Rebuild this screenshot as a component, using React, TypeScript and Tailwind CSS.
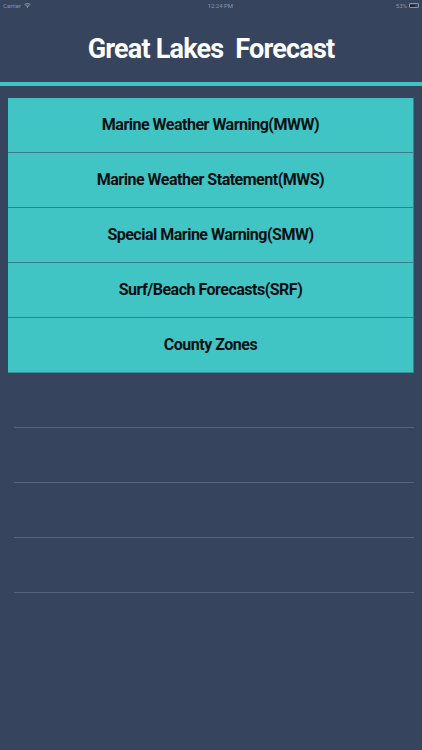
import React from 'react'

const ITEMS = [
  'Marine Weather Warning(MWW)',
  'Marine Weather Statement(MWS)',
  'Special Marine Warning(SMW)',
  'Surf/Beach Forecasts(SRF)',
  'County Zones',
]

function StatusBar() {
  return (
    <div className="flex h-[11px] items-center justify-between px-[3px] text-[6px] text-[#8a94a8]">
      <div className="flex items-center gap-[3px]">
        <span>Carrier</span>
        <svg width="7" height="5" viewBox="0 0 14 10" fill="#8a94a8">
          <path d="M7 10 L4.5 7.2 A3.6 3.6 0 0 1 9.5 7.2 Z M2.6 5.2 A6.4 6.4 0 0 1 11.4 5.2 L10.3 6.3 A4.8 4.8 0 0 0 3.7 6.3 Z M0.5 3 A9.5 9.5 0 0 1 13.5 3 L12.4 4.1 A8 8 0 0 0 1.6 4.1 Z" />
        </svg>
      </div>
      <span className="pl-[14px]">12:24 PM</span>
      <div className="flex items-center gap-[2px]">
        <span>53%</span>
        <div className="flex h-[5px] w-[10px] items-center rounded-[1px] border-[0.5px] border-[#8a94a8] p-[0.5px]">
          <div className="h-full w-[5px] bg-[#1d2536]" />
        </div>
      </div>
    </div>
  )
}

export default function App() {
  return (
    <div
      className="flex h-[750px] w-full flex-col bg-[#36445e]"
      style={{ fontFamily: 'Roboto, "Liberation Sans", sans-serif' }}
    >
      <StatusBar />

      {/* Header */}
      <div className="flex h-[71px] items-center justify-center pt-[6px]">
        <h1 className="text-[27px] font-bold tracking-[-0.8px] text-white whitespace-pre">
          Great Lakes  Forecast
        </h1>
      </div>
      <div className="h-[4px] bg-[#40c4c4]" />

      {/* List */}
      <div className="px-[8px] pt-[12px]">
        <div className="border-r border-[#2f8590] bg-[#40c4c4]">
          {ITEMS.map((item, i) => (
            <div
              key={item}
              className={`flex h-[55px] items-center justify-center text-[16px] font-bold tracking-[-0.5px] text-[#0a1013] ${
                i < ITEMS.length - 1 ? 'border-b border-[#3a7d8f]' : 'border-b border-[#3e8f9c]'
              }`}
            >
              {item}
            </div>
          ))}
        </div>

        {/* Empty rows */}
        <div className="pl-[6px]">
          {[0, 1, 2, 3].map(i => (
            <div key={i} className="h-[55px] border-b border-[#55647d]" />
          ))}
        </div>
      </div>
    </div>
  )
}
